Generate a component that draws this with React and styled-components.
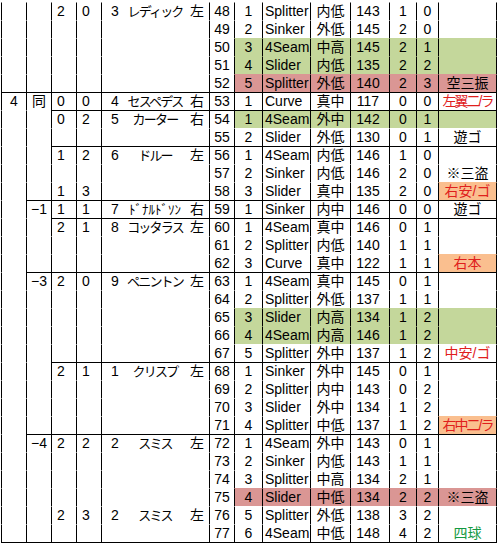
import React from 'react';
import styled, { createGlobalStyle } from 'styled-components';

const Global = createGlobalStyle`
  html, body { margin: 0; padding: 0; background: #fff; }
`;

const FILL = { green: '#c4d79b', red: '#da9694', orange: '#fabf8f' };
const INK = { red: '#e0201c', green: '#139a42', black: '#000' };

const Sheet = styled.div`
  display: flex;
  flex-direction: column;
  width: 496px;
  margin: 2px 0 0 1px;
  border-bottom: 1px solid #000;
  font-family: "Liberation Sans", "Noto Sans CJK JP", sans-serif;
  font-size: 14px;
  color: #000;
`;

const Row = styled.div`
  display: grid;
  grid-template-columns: 25px 25px 25px 25px 108px 25px 28px 48px 40px 39px 27px 22px 59px;
  height: 18px;
`;

const Cell = styled.div`
  box-sizing: border-box;
  height: 18px;
  border-left: 1px solid #000;
  border-top: 1px solid ${(p) => (p.$line ? '#000' : 'transparent')};
  background: ${(p) => p.$bg || 'transparent'};
  display: flex;
  align-items: center;
  justify-content: center;
  line-height: 17px;
  white-space: nowrap;
  overflow: hidden;
`;

const StateCell = styled(Cell)`
  padding-right: 6px;
`;

const BatterCell = styled(Cell)`
  justify-content: flex-start;
  padding: 0 5px 0 9px;
`;

const BatNum = styled.span`
  width: 9px;
`;

const BatName = styled.span`
  flex: 1;
  text-align: center;
  font-size: 13px;
  letter-spacing: ${(p) => (p.$narrow ? '0' : '-1.8px')};
`;

const Hand = styled.span`
  font-size: 14px;
`;

const TypeCell = styled(Cell)`
  justify-content: flex-start;
  padding-left: 2px;
`;

const SpeedCell = styled(Cell)`
  padding-right: 4px;
`;

const NoteCell = styled(Cell)`
  border-right: 1px solid #000;
  color: ${(p) => p.$color || '#000'};
  letter-spacing: ${(p) => (p.$tight ? '-2px' : '0')};
`;

const rows = [
  { n: 48, g: 1, t: 'Splitter', l: '内低', v: 143, b: 1, s: 0, outs: 2, run: 0, bat: { num: 3, name: 'レディック', hand: '左' } },
  { n: 49, g: 2, t: 'Sinker', l: '外低', v: 145, b: 2, s: 0 },
  { n: 50, g: 3, t: '4Seam', l: '中高', v: 145, b: 2, s: 1, fill: 'green' },
  { n: 51, g: 4, t: 'Slider', l: '内低', v: 135, b: 2, s: 2, fill: 'green' },
  { n: 52, g: 5, t: 'Splitter', l: '外低', v: 140, b: 2, s: 3, fill: 'red', note: '空三振' },
  { n: 53, line: 'all', inn: 4, diff: '同', outs: 0, run: 0, bat: { num: 4, name: 'セスペデス', hand: '右' }, g: 1, t: 'Curve', l: '真中', v: 117, b: 0, s: 0, note: '左翼二/ラ', ink: 'red', tight: true },
  { n: 54, line: 'ab', outs: 0, run: 2, bat: { num: 5, name: 'カーター', hand: '右' }, g: 1, t: '4Seam', l: '外中', v: 142, b: 0, s: 1, fill: 'green' },
  { n: 55, g: 2, t: 'Slider', l: '外低', v: 130, b: 0, s: 1, note: '遊ゴ' },
  { n: 56, line: 'ab', outs: 1, run: 2, bat: { num: 6, name: 'ドルー', hand: '左' }, g: 1, t: '4Seam', l: '内低', v: 146, b: 1, s: 0 },
  { n: 57, g: 2, t: 'Sinker', l: '内低', v: 146, b: 2, s: 0, note: '※三盗' },
  { n: 58, outs: 1, run: 3, g: 3, t: 'Slider', l: '真中', v: 135, b: 2, s: 0, note: '右安/ゴ', ink: 'red', noteFill: 'orange' },
  { n: 59, line: 'diff', diff: '−1', outs: 1, run: 1, bat: { num: 7, name: 'ﾄﾞﾅﾙﾄﾞｿﾝ', hand: '右', narrow: true }, g: 1, t: 'Sinker', l: '内中', v: 146, b: 0, s: 0, note: '遊ゴ' },
  { n: 60, line: 'ab', outs: 2, run: 1, bat: { num: 8, name: 'コッタラス', hand: '左' }, g: 1, t: '4Seam', l: '真中', v: 146, b: 0, s: 1 },
  { n: 61, g: 2, t: 'Splitter', l: '内低', v: 140, b: 1, s: 1 },
  { n: 62, g: 3, t: 'Curve', l: '真中', v: 122, b: 1, s: 1, note: '右本', ink: 'red', noteFill: 'orange' },
  { n: 63, line: 'diff', diff: '−3', outs: 2, run: 0, bat: { num: 9, name: 'ペニントン', hand: '左' }, g: 1, t: '4Seam', l: '真中', v: 145, b: 0, s: 1 },
  { n: 64, g: 2, t: 'Splitter', l: '外低', v: 137, b: 1, s: 1 },
  { n: 65, g: 3, t: 'Slider', l: '内高', v: 134, b: 1, s: 2, fill: 'green' },
  { n: 66, g: 4, t: '4Seam', l: '内高', v: 146, b: 1, s: 2, fill: 'green' },
  { n: 67, g: 5, t: 'Splitter', l: '外中', v: 137, b: 1, s: 2, note: '中安/ゴ', ink: 'red' },
  { n: 68, line: 'ab', outs: 2, run: 1, bat: { num: 1, name: 'クリスプ', hand: '左' }, g: 1, t: 'Sinker', l: '外中', v: 145, b: 0, s: 1 },
  { n: 69, g: 2, t: 'Splitter', l: '内中', v: 143, b: 0, s: 2 },
  { n: 70, g: 3, t: 'Slider', l: '外中', v: 134, b: 1, s: 2 },
  { n: 71, g: 4, t: 'Splitter', l: '中低', v: 137, b: 1, s: 2, note: '右中二/ラ', ink: 'red', noteFill: 'orange', tight: true },
  { n: 72, line: 'diff', diff: '−4', outs: 2, run: 2, bat: { num: 2, name: 'スミス', hand: '左' }, g: 1, t: '4Seam', l: '外中', v: 143, b: 0, s: 1 },
  { n: 73, g: 2, t: 'Sinker', l: '内低', v: 143, b: 1, s: 1 },
  { n: 74, g: 3, t: 'Splitter', l: '中高', v: 134, b: 2, s: 1 },
  { n: 75, g: 4, t: 'Slider', l: '中低', v: 134, b: 2, s: 2, fill: 'red', note: '※三盗' },
  { n: 76, outs: 2, run: 3, bat: { num: 2, name: 'スミス', hand: '左' }, g: 5, t: 'Splitter', l: '外低', v: 138, b: 3, s: 2 },
  { n: 77, g: 6, t: '4Seam', l: '中低', v: 148, b: 4, s: 2, note: '四球', ink: 'green' },
];

function PitchRow({ r }) {
  const lineA = r.line === 'all';
  const lineB = lineA || r.line === 'diff';
  const lineC = !!r.line;
  const bg = r.fill ? FILL[r.fill] : undefined;
  const noteBg = r.noteFill ? FILL[r.noteFill] : bg;
  return (
    <Row>
      <Cell $line={lineA}>{r.inn ?? ''}</Cell>
      <Cell $line={lineB}>{r.diff ?? ''}</Cell>
      <StateCell $line={lineC}>{r.outs ?? ''}</StateCell>
      <StateCell $line={lineC}>{r.run ?? ''}</StateCell>
      <BatterCell $line={lineC}>
        {r.bat && (
          <>
            <BatNum>{r.bat.num}</BatNum>
            <BatName $narrow={r.bat.narrow}>{r.bat.name}</BatName>
            <Hand>{r.bat.hand}</Hand>
          </>
        )}
      </BatterCell>
      <Cell $line={lineC}>{r.n}</Cell>
      <Cell $line={lineC} $bg={bg}>{r.g}</Cell>
      <TypeCell $line={lineC} $bg={bg}>{r.t}</TypeCell>
      <Cell $line={lineC} $bg={bg}>{r.l}</Cell>
      <SpeedCell $line={lineC} $bg={bg}>{r.v}</SpeedCell>
      <Cell $line={lineC} $bg={bg}>{r.b}</Cell>
      <Cell $line={lineC} $bg={bg}>{r.s}</Cell>
      <NoteCell $line={lineC} $bg={noteBg} $color={r.ink ? INK[r.ink] : undefined} $tight={r.tight}>
        {r.note ?? ''}
      </NoteCell>
    </Row>
  );
}

export default function App() {
  return (
    <>
      <Global />
      <Sheet>
        {rows.map((r) => (
          <PitchRow key={r.n} r={r} />
        ))}
      </Sheet>
    </>
  );
}
